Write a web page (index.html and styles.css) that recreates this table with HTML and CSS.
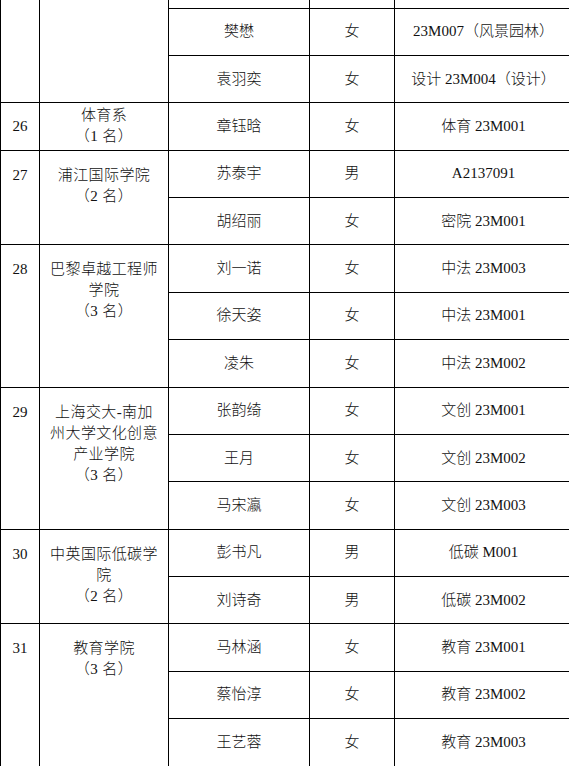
FILE: index.html
```html
<!DOCTYPE html>
<html lang="zh-CN">
<head>
<meta charset="utf-8">
<link rel="stylesheet" href="styles.css">
</head>
<body>
<table class="list">
  <colgroup>
    <col class="c-no"><col class="c-college"><col class="c-name"><col class="c-sex"><col class="c-code">
  </colgroup>
  <tbody>
    <tr class="stub">
      <td rowspan="3" class="top"></td>
      <td rowspan="3" class="top"></td>
      <td></td><td></td><td></td>
    </tr>
    <tr><td>樊懋</td><td>女</td><td>23M007（风景园林）</td></tr>
    <tr><td>袁羽奕</td><td>女</td><td>设计 23M004（设计）</td></tr>

    <tr><td>26</td><td class="college">体育系<br>（1 名）</td><td>章钰晗</td><td>女</td><td>体育 23M001</td></tr>

    <tr><td rowspan="2" class="top">27</td><td rowspan="2" class="top college">浦江国际学院<br>（2 名）</td><td>苏泰宇</td><td>男</td><td>A2137091</td></tr>
    <tr><td>胡绍丽</td><td>女</td><td>密院 23M001</td></tr>

    <tr><td rowspan="3" class="top">28</td><td rowspan="3" class="top college">巴黎卓越工程师<br>学院<br>（3 名）</td><td>刘一诺</td><td>女</td><td>中法 23M003</td></tr>
    <tr><td>徐天姿</td><td>女</td><td>中法 23M001</td></tr>
    <tr><td>凌朱</td><td>女</td><td>中法 23M002</td></tr>

    <tr><td rowspan="3" class="top">29</td><td rowspan="3" class="top college">上海交大-南加<br>州大学文化创意<br>产业学院<br>（3 名）</td><td>张韵绮</td><td>女</td><td>文创 23M001</td></tr>
    <tr><td>王月</td><td>女</td><td>文创 23M002</td></tr>
    <tr><td>马宋瀛</td><td>女</td><td>文创 23M003</td></tr>

    <tr><td rowspan="2" class="top">30</td><td rowspan="2" class="top college">中英国际低碳学<br>院<br>（2 名）</td><td>彭书凡</td><td>男</td><td>低碳 M001</td></tr>
    <tr><td>刘诗奇</td><td>男</td><td>低碳 23M002</td></tr>

    <tr><td rowspan="3" class="top">31</td><td rowspan="3" class="top college">教育学院<br>（3 名）</td><td>马林涵</td><td>女</td><td>教育 23M001</td></tr>
    <tr><td>蔡怡淳</td><td>女</td><td>教育 23M002</td></tr>
    <tr><td>王艺蓉</td><td>女</td><td>教育 23M003</td></tr>
  </tbody>
</table>
</body>
</html>
```
FILE: styles.css
```css
html, body {
  margin: 0;
  padding: 0;
  background: #fff;
  overflow: hidden;
}
body {
  width: 569px;
  height: 766px;
}
.list {
  border-collapse: collapse;
  table-layout: fixed;
  width: 572px;
  font-family: "Liberation Serif", "Noto Sans CJK SC", serif;
  font-size: 15px;
  font-weight: 300;
  color: #111;
  border-top: none;
}
.c-no { width: 39px; }
.c-college { width: 129px; }
.c-name { width: 141px; }
.c-sex { width: 85px; }
.c-code { width: 178px; }
.list td {
  border: 1px solid #000;
  padding: 0 2px;
  text-align: center;
  vertical-align: middle;
  line-height: 21px;
  white-space: nowrap;
  overflow: hidden;
}
.list tr { height: 47.375px; }
.list tr.stub { height: 8px; }
.list tr.stub td { border-top: none; }
.list td.top {
  vertical-align: top;
  padding-top: 14px;
}
.college { letter-spacing: 0.4px; }
```
